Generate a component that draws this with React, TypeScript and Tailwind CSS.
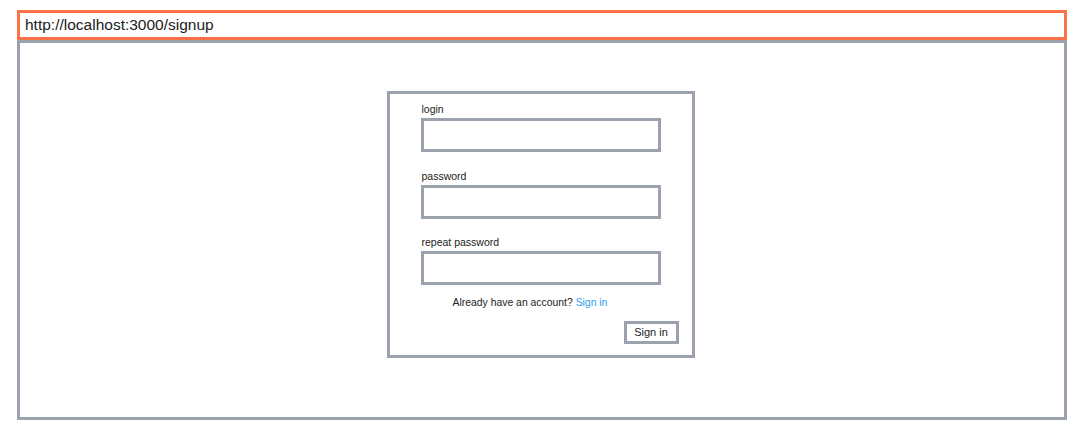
export default function App() {
  const font = { fontFamily: '"Liberation Sans", Arial, sans-serif' };
  return (
    <div className="h-[444px] w-[1085px] bg-white pl-[17px] pt-[10px] text-[#222]" style={font}>
      <div className="flex h-[30px] w-[1050px] items-center border-[3px] border-[#fd7149] px-[5px] text-[15.5px]">
        http://localhost:3000/signup
      </div>
      <div className="flex h-[380px] w-[1050px] justify-center border-[3px] border-[#9ba1ad] pt-[48px]">
        <div className="ml-[-3px] flex h-[267px] w-[308px] flex-col border-[3px] border-[#9ba1ad] pl-[31px] pr-[13px] pt-[8px]">
          <Field label="login" />
          <div className="h-[17px]" />
          <Field label="password" />
          <div className="h-[16px]" />
          <Field label="repeat password" />
          <p className="mt-[11px] mr-[39px] text-center text-[10.4px] leading-[14px]">
            Already have an account? <a className="text-[#2f9bf0]">Sign in</a>
          </p>
          <div className="mt-[11px] flex justify-end">
            <button className="h-[23px] w-[55px] border-[3px] border-[#9ba1ad] text-[11px] leading-none">
              Sign in
            </button>
          </div>
        </div>
      </div>
    </div>
  );
}

function Field({ label }: { label: string }) {
  return (
    <div className="flex flex-col">
      <span className="pl-px text-[10.5px] leading-[14px]">{label}</span>
      <div className="mt-[2px] h-[34px] w-[240px] border-[3px] border-[#9ba1ad]" />
    </div>
  );
}
